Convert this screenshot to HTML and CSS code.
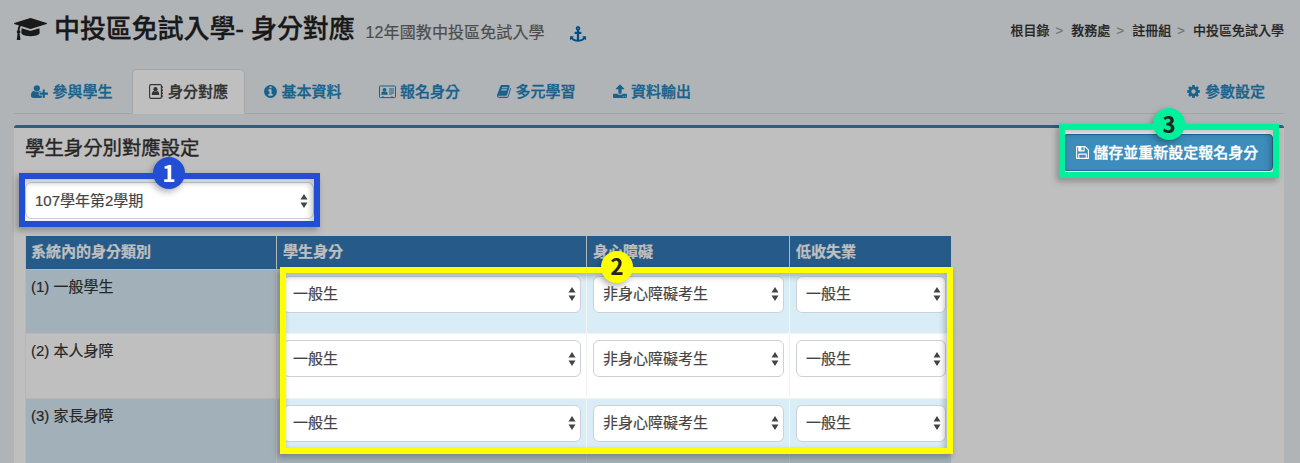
FILE: index.html
```html
<!DOCTYPE html>
<html lang="zh-Hant">
<head>
<meta charset="utf-8">
<title>中投區免試入學 - 身分對應</title>
<link rel="stylesheet" href="styles.css">
</head>
<body>
<svg class="defs" width="0" height="0">
  <symbol id="arrows" viewBox="0 0 8 14"><path d="M4 0l3.500 5.500h-7zM4 14l3.500-5.500h-7z"/></symbol>
</svg>
<div class="page">
  <header class="header">
    <svg class="cap" viewBox="0 0 2304 1792"><path d="M1774 836l18 316q4 69-82 128t-235 93.500-323 34.500-323-34.500-235-93.500-82-128l18-316 574 181q22 7 48 7t48-7zm530-324q0 23-22 31l-1120 352q-4 1-10 1t-10-1l-652-206q-43 34-71 111.500t-34 178.500q63 36 63 109 0 69-58 107l58 433q2 14-8 25-9 11-24 11h-192q-15 0-24-11-10-11-8-25l58-433q-58-38-58-107 0-73 65-111 11-207 98-330l-333-104q-22-8-22-31t22-31l1120-352q4-1 10-1t10 1l1120 352q22 8 22 31z"/></svg>
    <h1 class="title">中投區免試入學- 身分對應</h1>
    <span class="subtitle">12年國教中投區免試入學</span>
    <svg class="anchor" viewBox="0 0 1792 1792"><path d="M960 256q0-26-19-45t-45-19-45 19-19 45 19 45 45 19 45-19 19-45zm832 928v352q0 22-20 30-8 2-12 2-12 0-23-9l-93-93q-119 143-318.500 226.500t-429.500 83.500-429.500-83.500-318.500-226.500l-93 93q-9 9-23 9-4 0-12-2-20-8-20-30v-352q0-14 9-23t23-9h352q22 0 30 20 8 19-7 35l-100 100q67 91 189.500 153.500t271.500 82.500v-647h-192q-26 0-45-19t-19-45v-128q0-26 19-45t45-19h192v-163q-58-34-93-92.500t-35-128.500q0-106 75-181t181-75 181 75 75 181q0 70-35 128.500t-93 92.500v163h192q26 0 45 19t19 45v128q0 26-19 45t-45 19h-192v647q149-20 271.500-82.500t189.500-153.500l-100-100q-15-16-7-35 8-20 30-20h352q14 0 23 9t9 23z"/></svg>
    <nav class="crumbs"><span>根目錄</span><i>&gt;</i><span>教務處</span><i>&gt;</i><span>註冊組</span><i>&gt;</i><span>中投區免試入學</span></nav>
  </header>

  <nav class="tabs">
    <a class="tab"><svg class="icon wide" viewBox="0 0 2048 1792"><path d="M704 896q-159 0-271.500-112.500t-112.500-271.500 112.500-271.500 271.500-112.500 271.500 112.500 112.500 271.500-112.500 271.500-271.500 112.500zm960 128h352q13 0 22.500 9.500t9.500 22.500v192q0 13-9.500 22.500t-22.500 9.500h-352v352q0 13-9.500 22.500t-22.500 9.500h-192q-13 0-22.500-9.500t-9.500-22.500v-352h-352q-13 0-22.500-9.500t-9.500-22.500v-192q0-13 9.500-22.500t22.500-9.500h352v-352q0-13 9.500-22.500t22.500-9.500h192q13 0 22.500 9.500t9.500 22.500v352zm-736 224q0 52 38 90t90 38h256v238q-68 50-171 50h-874q-121 0-194-69t-73-190q0-53 3.500-103.500t14-109 26.500-108.500 43-97.500 62-81 85.500-53.500 111.500-20q19 0 39 17 79 61 154.500 91.500t164.500 30.500 164.500-30.500 154.500-91.500q20-17 39-17 132 0 217 96h-223q-52 0-90 38t-38 90v192z"/></svg>參與學生</a>
    <a class="tab active"><svg class="icon book" viewBox="0 0 14 15"><rect x=".6" y=".6" width="11.800" height="13.800" rx="1.300" fill="none" stroke="currentColor" stroke-width="1.100"/><circle cx="6.500" cy="5.200" r="2.100"/><path d="M2.800 11q0-4 2.200-4 1.500 1 3 0 2.200 0 2.200 4zM12.400 2.200h1.400v2h-1.400zM12.400 5.200h1.400v2h-1.400zM12.400 8.200h1.400v2h-1.400zM12.400 11.200h1.400v2h-1.400z"/></svg>身分對應</a>
    <a class="tab"><svg class="icon" viewBox="128 0 1536 1792"><path d="M1152 1376v-160q0-14-9-23t-23-9h-96v-512q0-14-9-23t-23-9h-320q-14 0-23 9t-9 23v160q0 14 9 23t23 9h96v320h-96q-14 0-23 9t-9 23v160q0 14 9 23t23 9h448q14 0 23-9t9-23zm-128-896v-160q0-14-9-23t-23-9h-192q-14 0-23 9t-9 23v160q0 14 9 23t23 9h192q14 0 23-9t9-23zm640 416q0 209-103 385.500t-279.500 279.500-385.500 103-385.500-103-279.500-279.500-103-385.500 103-385.500 279.500-279.500 385.500-103 385.500 103 279.500 279.500 103 385.500z"/></svg>基本資料</a>
    <a class="tab"><svg class="icon wide" viewBox="0 0 17 15"><path d="M.5 2.800q0-.8.8-.8h14.400q.8 0 .8.800v10q0 .8-.8.800H1.300q-.8 0-.8-.8z" fill="none" stroke="currentColor"/><circle cx="5.500" cy="5.800" r="1.900"/><path d="M2.300 10.700q0-3.200 1.900-3.200 1.300.8 2.600 0 1.900 0 1.900 3.200zM10 4.500h5v1h-5zM10 6.500h5v1h-5zM10 8.500h5v1h-5zM10 10.500h3v.6h-3zM3 12.500h2v1H3zM12 12.500h2v1h-2z"/></svg>報名身分</a>
    <a class="tab"><svg class="icon books" viewBox="64 0 1664 1792"><path d="M1703 478q40 57 18 129l-275 906q-19 64-76.500 107.500t-122.500 43.500h-923q-77 0-148.500-53.500t-99.500-131.500q-24-67-2-127 0-4 3-27t4-37q1-8-3-21.500t-3-19.500q2-11 8-21t16.500-23.500 16.500-23.500q23-38 45-91.500t30-91.500q3-10 .5-30t-.5-28q3-11 17-28t17-23q21-36 42-92t25-90q1-9-2.500-32t.5-28q4-13 22-30.500t22-22.500q19-26 42.500-84.500t27.500-96.500q1-8-3-25.500t-2-26.500q2-8 9-18t18-23 17-21q8-12 16.500-30.500t15-35 16-36 19.500-32 26.500-23.500 36-11.500 47.500 5.500l-1 3q38-9 51-9h761q74 0 114 56t18 130l-274 906q-36 119-71.500 153.500t-128.500 34.500h-869q-27 0-38 15-11 16-1 43 24 70 144 70h923q29 0 56-15.500t35-41.500l300-987q7-22 5-57 38 15 59 43zm-1064 2q-4 13 2 22.500t20 9.500h608q13 0 25.500-9.500t16.500-22.500l21-64q4-13-2-22.500t-20-9.500h-608q-13 0-25.500 9.500t-16.500 22.500zm-83 256q-4 13 2 22.500t20 9.500h608q13 0 25.500-9.500t16.500-22.500l21-64q4-13-2-22.500t-20-9.500h-608q-13 0-25.500 9.500t-16.500 22.500z"/></svg>多元學習</a>
    <a class="tab"><svg class="icon books" viewBox="64 0 1664 1792"><path d="M1344 1472q0-26-19-45t-45-19-45 19-19 45 19 45 45 19 45-19 19-45zm256 0q0-26-19-45t-45-19-45 19-19 45 19 45 45 19 45-19 19-45zm128-224v320q0 40-28 68t-68 28h-1472q-40 0-68-28t-28-68v-320q0-40 28-68t68-28h427q21 56 70.500 92t110.500 36h256q61 0 110.500-36t70.500-92h427q40 0 68 28t28 68zm-325-648q-17 40-59 40h-256v448q0 26-19 45t-45 19h-256q-26 0-45-19t-19-45v-448h-256q-42 0-59-40-17-39 14-69l448-448q18-19 45-19t45 19l448 448q31 30 14 69z"/></svg>資料輸出</a>
    <a class="tab last"><svg class="icon" viewBox="128 0 1536 1792"><path d="M1152 896q0-106-75-181t-181-75-181 75-75 181 75 181 181 75 181-75 75-181zm512-109v222q0 12-8 23t-20 13l-185 28q-19 54-39 91 35 50 107 138 10 12 10 25t-9 23q-27 37-99 108t-94 71q-12 0-26-9l-138-108q-44 23-91 38-16 136-29 186-7 28-36 28h-222q-14 0-24.500-8.500t-11.500-21.500l-28-184q-49-16-90-37l-141 107q-10 9-25 9-14 0-25-11-126-114-165-168-7-10-7-23 0-12 8-23 15-21 51-66.500t54-70.500q-27-50-41-99l-183-27q-13-2-21-12.500t-8-23.500v-222q0-12 8-23t19-13l186-28q14-46 39-92-40-57-107-138-10-12-10-24 0-10 9-23 26-36 98.500-107.500t94.500-71.500q13 0 26 10l138 107q44-23 91-38 16-136 29-186 7-28 36-28h222q14 0 24.500 8.500t11.500 21.500l28 184q49 16 90 37l142-107q9-9 24-9 13 0 25 10 129 119 165 170 7 8 7 22 0 12-8 23-15 21-51 66.500t-54 70.500q26 50 41 98l183 28q13 2 21 12.500t8 23.500z"/></svg>參數設定</a>
  </nav>

  <main class="panel">
    <div class="panel-head">
      <h2 class="panel-title">學生身分別對應設定</h2>
      <button class="save"><svg class="icon" viewBox="128 0 1536 1792"><path d="M512 1536h768v-384h-768v384zm896 0h128v-896q0-14-10-38.500t-20-34.500l-281-281q-10-10-34-20t-39-10v416q0 40-28 68t-68 28h-576q-40 0-68-28t-28-68v-416h-128v1280h128v-416q0-40 28-68t68-28h832q40 0 68 28t28 68v416zm-384-928v-320q0-13-9.500-22.500t-22.500-9.500h-192q-13 0-22.500 9.500t-9.500 22.500v320q0 13 9.500 22.500t22.500 9.500h192q13 0 22.500-9.500t9.500-22.500zm640 32v928q0 40-28 68t-68 28h-1344q-40 0-68-28t-28-68v-1344q0-40 28-68t68-28h928q40 0 88 20t76 48l280 280q28 28 48 76t20 88z"/></svg>儲存並重新設定報名身分</button>
    </div>
    <div class="select term"><span>107學年第2學期</span><svg class="arrows"><use href="#arrows"/></svg></div>
    <div class="table">
      <div class="row head"><div>系統內的身分類別</div><div>學生身分</div><div>身心障礙</div><div>低收失業</div></div>
      <div class="row odd">
        <div class="name">(1) 一般學生</div>
        <div><div class="select"><span>一般生</span><svg class="arrows"><use href="#arrows"/></svg></div></div>
        <div><div class="select"><span>非身心障礙考生</span><svg class="arrows"><use href="#arrows"/></svg></div></div>
        <div><div class="select"><span>一般生</span><svg class="arrows"><use href="#arrows"/></svg></div></div>
      </div>
      <div class="row">
        <div class="name">(2) 本人身障</div>
        <div><div class="select"><span>一般生</span><svg class="arrows"><use href="#arrows"/></svg></div></div>
        <div><div class="select"><span>非身心障礙考生</span><svg class="arrows"><use href="#arrows"/></svg></div></div>
        <div><div class="select"><span>一般生</span><svg class="arrows"><use href="#arrows"/></svg></div></div>
      </div>
      <div class="row odd">
        <div class="name">(3) 家長身障</div>
        <div><div class="select"><span>一般生</span><svg class="arrows"><use href="#arrows"/></svg></div></div>
        <div><div class="select"><span>非身心障礙考生</span><svg class="arrows"><use href="#arrows"/></svg></div></div>
        <div><div class="select"><span>一般生</span><svg class="arrows"><use href="#arrows"/></svg></div></div>
      </div>
    </div>
  </main>
</div>

<svg class="shade" viewBox="0 0 1300 463"><path fill-rule="evenodd" d="M0 0H1300V463H0zM20 174H319V226H20zM281 268H952V453H281zM1060 125H1278V177H1060z"/></svg>
<div class="mark blue"><b>1</b></div>
<div class="mark yellow"><b>2</b></div>
<div class="mark green"><b>3</b></div>
</body>
</html>
```
FILE: styles.css
```css
* { box-sizing: border-box; }
body {
  margin: 0;
  width: 1300px;
  height: 463px;
  overflow: hidden;
  position: relative;
  background: #ecf0f5;
  color: #333;
  font: 15px/20px "Liberation Sans", "Noto Sans CJK TC", sans-serif;
  -webkit-text-stroke: .2px;
}
.defs { display: block; height: 0; }
svg { fill: currentColor; flex: none; }
.page { height: 463px; padding: 0 16px 0 14px; overflow: hidden; }

.header { display: flex; align-items: center; height: 69px; padding-bottom: 9px; color: #222; }
.cap { width: 33px; height: 26px; margin: -3px 7px 0 0; }
.title { margin: -2px 0 0; font-size: 26px; line-height: 36px; font-weight: 500; letter-spacing: -.1px; white-space: nowrap; -webkit-text-stroke: .3px; }
.subtitle { margin: 5px 0 0 11px; font-size: 16px; letter-spacing: .1px; color: #666; white-space: nowrap; }
.anchor { width: 16px; height: 16px; margin: 7px 0 0 25px; color: #0068b0; }
.crumbs { display: flex; margin: 2px 0 0 auto; font-size: 13px; font-weight: 500; color: #333; white-space: nowrap; }
.crumbs i { width: 21.800px; padding-left: 6px; font-style: normal; color: #999; }

.tabs { display: flex; height: 45px; border-bottom: 1px solid #ddd; color: #2183bb; font-weight: 500; -webkit-text-stroke: .3px; }
.tab { display: flex; align-items: center; height: 45px; padding: 0 17px 0 16px; border: 1px solid transparent; white-space: nowrap; margin-right: 1px; }
.tab.active { padding: 0 16px; background: #fff; border-color: #ddd; border-bottom-color: #fff; border-radius: 5px 5px 0 0; color: #444; }
.tab.active ~ .tab { padding-left: 17px; }
.tab.active .icon { margin-right: 5.500px; }
.tab.last { margin: 0 0 0 auto; padding-right: 18px; }
.icon { width: 13px; height: 15px; margin-right: 4.500px; }
.icon.wide { width: 17px; }
.icon.book, .icon.books { width: 14px; }

.panel { height: 360px; margin-top: 11px; padding: 0 11px; background: #fff; border-top: 3px solid #3080b8; border-radius: 3px 3px 0 0; }
.panel-head { display: flex; justify-content: space-between; height: 54px; padding-top: 6px; }
.panel-title { margin: 0; padding-top: 1px; font-size: 19.400px; line-height: 26px; font-weight: 400; color: #333; -webkit-text-stroke: .4px; }
.save { display: flex; align-items: center; justify-content: center; width: 210px; height: 37px; margin: 0; padding: 0 2px 0 0; border: 1px solid #286c9a; border-radius: 4px; background: #3c8dbc; color: #fff; font: 500 15px/20px "Liberation Sans", "Noto Sans CJK TC", sans-serif; white-space: nowrap; -webkit-text-stroke: .3px; }

.select { display: flex; justify-content: space-between; align-items: center; height: 37px; padding: 0 4px 0 9px; border: 1px solid #ccd0d9; border-radius: 6px; background: #fff; color: #444; white-space: nowrap; }
.select.term { width: 289px; padding-right: 5px; }
.arrows { width: 8px; height: 14px; }

.table { width: 926px; margin-top: 16.500px; }
.row { display: grid; grid-template-columns: 251px 310px 203px 162px; height: 64.700px; border-bottom: 1px solid #f4f4f4; }
.row > div { padding: 6px 5px 6px 6px; border-left: 1px solid #f4f4f4; }
.row.odd { background: #d9edf7; }
.row.head { height: 34px; background: #337ab7; color: #fff; font-weight: 700; }
.row > .name { padding-left: 5px; padding-top: 7px; }
.row.head > div { padding: 6px 6px; }
.row.head > div:first-child { padding-left: 5px; }

.shade { position: absolute; left: 0; top: 0; width: 1300px; height: 463px; fill: rgba(0, 0, 0, .25); }
.mark { position: absolute; border: 6px solid; filter: drop-shadow(-2px 3px 3px rgba(0, 0, 0, .3)); }
.mark b { position: absolute; width: 32px; height: 32px; border-radius: 50%; color: #222; font: 700 22px/32px "Noto Sans CJK TC", sans-serif; text-align: center; }
.blue { left: 19px; top: 173px; width: 301px; height: 54px; border-color: #224ed4; }
.blue b { left: 128px; top: -22px; background: #224ed4; color: #fff; line-height: 31px; }
.yellow { left: 280px; top: 267px; width: 673px; height: 187px; border-color: #ff0; }
.yellow b { left: 315px; top: -22px; background: #ff0; line-height: 29px; }
.green { left: 1059px; top: 124px; width: 220px; height: 54px; border-color: #00f09c; }
.green b { left: 88px; top: -22px; background: #00f09c; line-height: 30px; }
```
